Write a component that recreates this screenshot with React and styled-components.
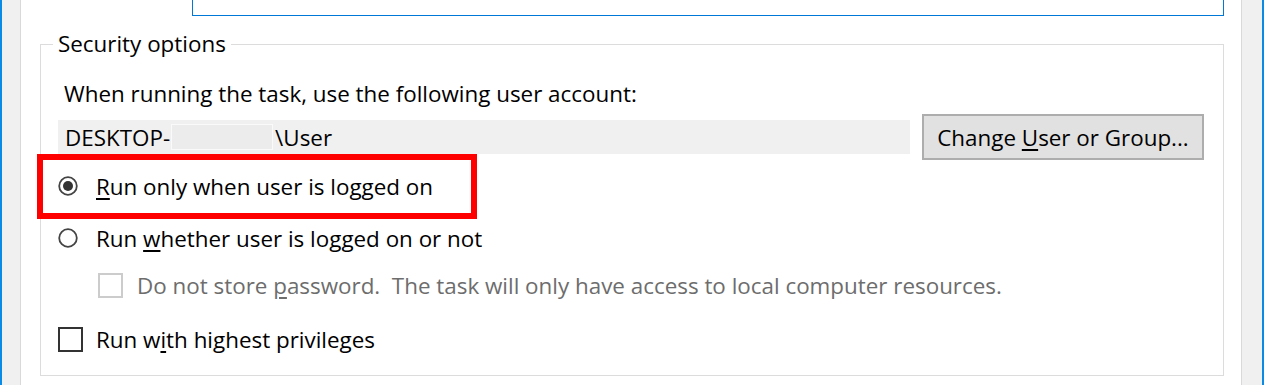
import React from "react";
import styled, { createGlobalStyle } from "styled-components";

const Global = createGlobalStyle`
  html, body { margin: 0; padding: 0; background: #fff; }
  body { font-family: "Open Sans", "Noto Sans", sans-serif; color: #000; }
`;

const FS = "22.4px";

const Window = styled.div`
  display: flex;
  width: 1264px;
  height: 385px;
  overflow: hidden;
  background: #fff;
`;

const LeftRail = styled.div`
  width: 18px;
  flex: none;
  background: #f0f0f0;
  border-left: 2px solid #0a8ce6;
  border-right: 1px solid #d9d9d9;
`;

const RightRail = styled.div`
  width: 20px;
  flex: none;
  background: #f0f0f0;
  border-left: 1px solid #d9d9d9;
  border-right: 2px solid #0a8ce6;
`;

const Main = styled.div`
  flex: 1;
  display: flex;
  flex-direction: column;
  padding: 0 17px 0 19px;
`;

const TextBox = styled.div`
  height: 15px;
  margin-left: 152px;
  border: 1px solid #0078d7;
  border-top: none;
  background: #fff;
`;

const GroupBox = styled.fieldset`
  margin: 15px 0 0 0;
  padding: 22px 19px 21px 12px;
  border: 1px solid #dcdcdc;
  min-width: 0;
`;

const Legend = styled.legend`
  padding: 0 5px;
  font-size: ${FS};
  line-height: 26px;
`;

const Body = styled.div`
  display: flex;
  flex-direction: column;
  padding-left: 5px;
`;

const Intro = styled.div`
  font-size: ${FS};
  line-height: 30px;
  height: 30px;
  padding-left: 6px;
`;

const AccountRow = styled.div`
  display: flex;
  align-items: center;
  gap: 12px;
  height: 46px;
  margin-top: 5px;
`;

const AccountField = styled.div`
  flex: 1;
  height: 34px;
  background: #f0f0f0;
  display: flex;
  align-items: center;
  padding-left: 7px;
  font-size: ${FS};
`;

const Redacted = styled.span`
  display: inline-block;
  width: 100px;
  height: 24px;
  background: #ececec;
  border: 1px solid #fafafa;
  margin: 0 2px 0 1px;
`;

const Button = styled.button`
  width: 282px;
  height: 46px;
  flex: none;
  background: #e1e1e1;
  border: 2px solid #adadad;
  font-family: inherit;
  font-size: ${FS};
  color: #000;
  padding: 0;
`;

const Row = styled.div`
  position: relative;
  display: flex;
  align-items: center;
  height: 30px;
  margin-top: ${(p) => p.$mt}px;
  margin-left: ${(p) => p.$indent || 0}px;
  gap: ${(p) => p.$gap}px;
  font-size: ${FS};
  color: ${(p) => (p.$disabled ? "#6d6d6d" : "#000")};
`;

const Highlight = styled.div`
  position: absolute;
  left: -21px;
  top: -17px;
  width: 440px;
  height: 65px;
  box-sizing: border-box;
  border: 6px solid #ff0000;
  pointer-events: none;
`;

const Box = styled.span`
  display: inline-block;
  width: 25px;
  height: 25px;
  box-sizing: border-box;
  flex: none;
  background: #fff;
  border: 2px solid ${(p) => (p.$disabled ? "#cccccc" : "#333333")};
`;

const U = styled.span`
  text-decoration: underline;
  text-underline-offset: 3px;
`;

const Radio = ({ checked }) => (
  <svg width="20" height="20" viewBox="0 0 20 20" style={{ flex: "none" }}>
    <circle cx="10" cy="10" r="8.8" fill="#fff" stroke="#444" strokeWidth="1.8" />
    {checked && <circle cx="10" cy="10" r="5" fill="#333" />}
  </svg>
);

export default function App() {
  return (
    <>
      <Global />
      <Window>
        <LeftRail />
        <Main>
          <TextBox />
          <GroupBox>
            <Legend>Security options</Legend>
            <Body>
              <Intro>When running the task, use the following user account:</Intro>
              <AccountRow>
                <AccountField>
                  DESKTOP-<Redacted />\User
                </AccountField>
                <Button>
                  Change <U>U</U>ser or Group...
                </Button>
              </AccountRow>
              <Row $mt={11} $gap={18}>
                <Highlight />
                <Radio checked />
                <span>
                  <U>R</U>un only when user is logged on
                </span>
              </Row>
              <Row $mt={22} $gap={18}>
                <Radio />
                <span>
                  Run <U>w</U>hether user is logged on or not
                </span>
              </Row>
              <Row $mt={17} $gap={14} $indent={40} $disabled>
                <Box $disabled />
                <span>
                  Do not store <U>p</U>assword.&nbsp; The task will only have access to local computer resources.
                </span>
              </Row>
              <Row $mt={24} $gap={13}>
                <Box />
                <span>
                  Run w<U>i</U>th highest privileges
                </span>
              </Row>
            </Body>
          </GroupBox>
        </Main>
        <RightRail />
      </Window>
    </>
  );
}
